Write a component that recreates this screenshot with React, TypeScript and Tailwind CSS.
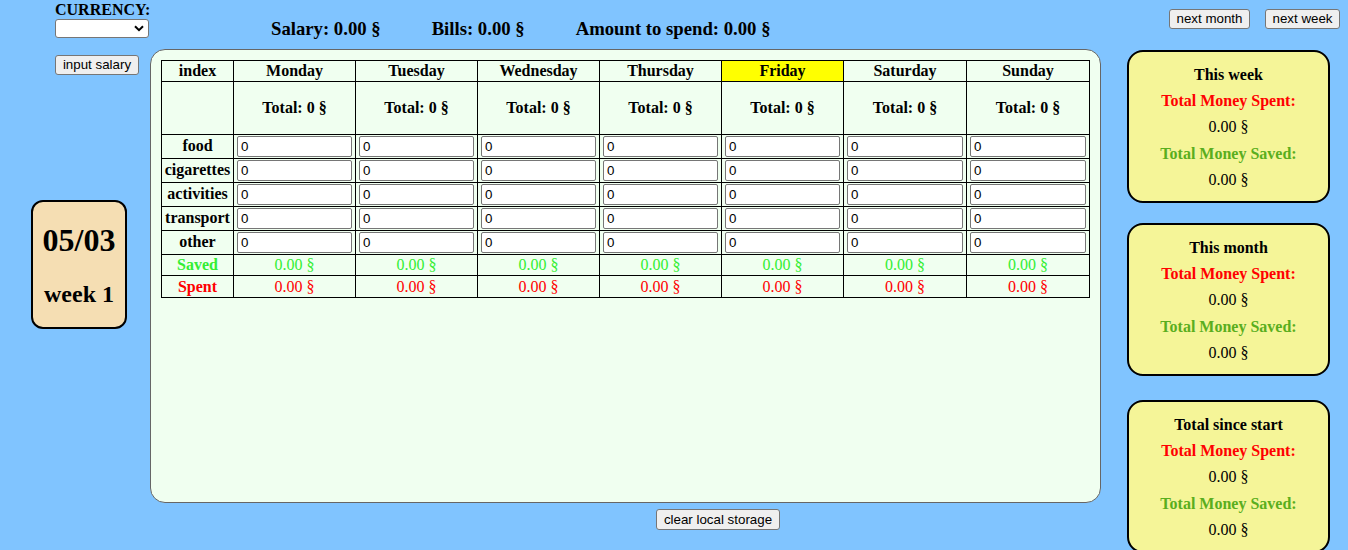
import React from "react";

const days = ["Monday", "Tuesday", "Wednesday", "Thursday", "Friday", "Saturday", "Sunday"];
const cats = ["food", "cigarettes", "activities", "transport", "other"];
const widths = [122, 122, 122, 122, 122, 123, 123];

function Btn({ children, className = "" }: { children: React.ReactNode; className?: string }) {
  return (
    <button
      className={
        "block h-[20px] bg-[#efefef] border border-[#767676] rounded-[3px] px-[6px] text-[13.33px] leading-[16px] text-black font-['Liberation_Sans',Arial,sans-serif] " +
        className
      }
    >
      {children}
    </button>
  );
}

function Card({ title, className = "" }: { title: string; className?: string }) {
  return (
    <div
      className={
        "w-[203px] bg-[#f5f598] border-2 border-black rounded-[16px] pt-[10px] pb-[8px] flex flex-col items-center text-[16px] leading-[26.2px] " +
        className
      }
    >
      <div className="font-bold text-black">{title}</div>
      <div className="font-bold text-[#ff0000]">Total Money Spent:</div>
      <div className="text-black">0.00 §</div>
      <div className="font-bold text-[#5aae1e]">Total Money Saved:</div>
      <div className="text-black">0.00 §</div>
    </div>
  );
}

export default function App() {
  const cell = "border border-black p-0 text-center";
  return (
    <div className="w-[1348px] h-[550px] overflow-hidden bg-[#80c4ff] flex font-['Liberation_Serif','Times_New_Roman',serif] text-black">
      {/* left column */}
      <div className="w-[150px] shrink-0 flex flex-col">
        <div className="pl-[55px]">
          <div className="font-bold text-[16px] leading-[18px] mt-[1px]">CURRENCY:</div>
          <div className="w-[94px] h-[19px] bg-white border border-[#767676] rounded-[3px] flex items-center justify-end pr-[4px]">
            <svg width="10" height="7" viewBox="0 0 10 7">
              <path d="M1 1.2 L5 5.2 L9 1.2" fill="none" stroke="black" strokeWidth="2" />
            </svg>
          </div>
          <Btn className="mt-[17px] w-[84px]">input salary</Btn>
        </div>
        <div className="ml-[31px] mt-[125px] w-[96px] h-[129px] bg-[#f5deb3] border-2 border-black rounded-[12px] flex flex-col items-center pt-[20px]">
          <div className="font-bold text-[32px] leading-[36px]">05/03</div>
          <div className="font-bold text-[24px] leading-[28px] mt-[22px]">week 1</div>
        </div>
      </div>

      {/* middle column */}
      <div className="w-[951px] shrink-0 flex flex-col">
        <div className="h-[49px] pt-[18px] pl-[121px] flex gap-[51px] font-bold text-[18.72px] leading-[22px] whitespace-nowrap">
          <span>Salary: 0.00 §</span>
          <span>Bills: 0.00 §</span>
          <span>Amount to spend: 0.00 §</span>
        </div>
        <div className="h-[454px] shrink-0 bg-[#f0fff0] border border-[#666] rounded-[15px] pt-[10px] pl-[10px]">
          <table className="border-collapse table-fixed w-[928px] text-[16px]">
            <colgroup>
              <col style={{ width: 72 }} />
              {widths.map((w, i) => (
                <col key={i} style={{ width: w }} />
              ))}
            </colgroup>
            <tbody>
              <tr>
                <td className={cell + " h-[21px] font-bold leading-[20px]"}>index</td>
                {days.map((d) => (
                  <td
                    key={d}
                    className={cell + " font-bold leading-[20px] " + (d === "Friday" ? "bg-[#ffff00]" : "")}
                  >
                    {d}
                  </td>
                ))}
              </tr>
              <tr>
                <td className={cell + " h-[53px]"}></td>
                {days.map((d) => (
                  <td key={d} className={cell + " font-bold"}>
                    Total: 0 §
                  </td>
                ))}
              </tr>
              {cats.map((c) => (
                <tr key={c}>
                  <td className={cell + " h-[24px] font-bold leading-[20px] pb-[1px]"}>{c}</td>
                  {days.map((d) => (
                    <td key={d} className={cell + " px-[3px]"}>
                      <div className="h-[21px] bg-white border border-[#767676] rounded-[2px] pl-[3px] text-left text-[13.33px] leading-[19px] font-['Liberation_Sans',Arial,sans-serif]">
                        0
                      </div>
                    </td>
                  ))}
                </tr>
              ))}
              <tr>
                <td className={cell + " h-[21px] font-bold text-[#33ee33] leading-[20px]"}>Saved</td>
                {days.map((d) => (
                  <td key={d} className={cell + " text-[#33ee33] leading-[20px]"}>
                    0.00 §
                  </td>
                ))}
              </tr>
              <tr>
                <td className={cell + " h-[22px] font-bold text-[#ff0000] leading-[20px]"}>Spent</td>
                {days.map((d) => (
                  <td key={d} className={cell + " text-[#ff0000] leading-[20px]"}>
                    0.00 §
                  </td>
                ))}
              </tr>
            </tbody>
          </table>
        </div>
        <div className="flex pl-[506px] mt-[6px]">
          <Btn className="w-[124px] h-[21px]">clear local storage</Btn>
        </div>
      </div>

      {/* right column */}
      <div className="flex-1 flex flex-col">
        <div className="pt-[9px] flex justify-end gap-[15px] pr-[8px]">
          <Btn className="w-[81px]">next month</Btn>
          <Btn className="w-[75px]">next week</Btn>
        </div>
        <div className="ml-[26px]">
          <Card title="This week" className="mt-[21px]" />
          <Card title="This month" className="mt-[20px]" />
          <Card title="Total since start" className="mt-[24px]" />
        </div>
      </div>
    </div>
  );
}
